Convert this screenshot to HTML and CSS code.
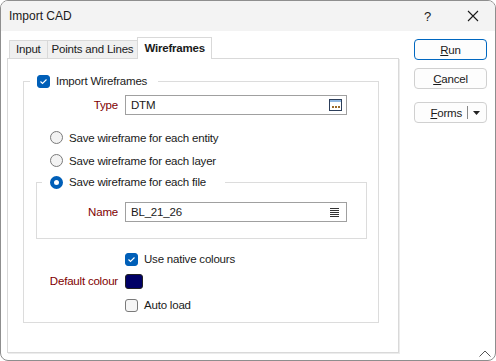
FILE: index.html
```html
<!DOCTYPE html>
<html lang="en">
<head>
	<meta charset="UTF-8">
	<title>Import CAD</title>
	<link rel="stylesheet" href="styles.css">
</head>
<body>
	<div class="window">
		<div class="titlebar">
			<span class="title">Import CAD</span>
			<span class="help">?</span>
			<span class="close">
				<svg width="12" height="12" viewBox="0 0 12 12"><path d="M1 1 L11 11 M11 1 L1 11" stroke="#1a1a1a" stroke-width="1.1"/></svg>
			</span>
		</div>
		<div class="dialog-body">
			<div class="main">
				<div class="tabs">
					<div class="tab tab-input">Input</div>
					<div class="tab">Points and Lines</div>
					<div class="tab active">Wireframes</div>
				</div>
				<div class="panel">
					<div class="group outer">
						<div class="legend"><span class="check on"></span>Import Wireframes</div>
						<div class="row row-type">
							<label class="lbl">Type</label>
							<div class="field">DTM
								<svg class="field-icon" width="13" height="12" viewBox="0 0 13 12">
									<rect x="0.5" y="0.5" width="12" height="11" fill="#fff" stroke="#2c3e5a"/>
									<rect x="1" y="1" width="11" height="2" fill="#8fb6e0"/>
									<rect x="3" y="7" width="2" height="2" fill="#9a6a2a"/>
									<rect x="6" y="7" width="2" height="2" fill="#9a6a2a"/>
									<rect x="9" y="7" width="2" height="2" fill="#9a6a2a"/>
								</svg>
							</div>
						</div>
						<div class="opt first"><span class="radio"></span>Save wireframe for each entity</div>
						<div class="opt"><span class="radio"></span>Save wireframe for each layer</div>
						<div class="group inner">
							<div class="legend"><span class="radio on"></span>Save wireframe for each file</div>
							<div class="row row-name">
								<label class="lbl">Name</label>
								<div class="field">BL_21_26
									<svg class="field-icon" width="9" height="9" viewBox="0 0 9 9">
										<path d="M0 0.5 H9 M0 2.5 H9 M0 4.5 H9 M0 6.5 H9 M0 8.5 H9" stroke="#333" stroke-width="1"/>
									</svg>
								</div>
							</div>
						</div>
						<div class="row row-native">
							<span class="lbl"></span>
							<span class="check on"></span><span class="cap">Use native colours</span>
						</div>
						<div class="row row-colour">
							<label class="lbl">Default colour</label>
							<span class="swatch"></span>
						</div>
						<div class="row row-auto">
							<span class="lbl"></span>
							<span class="check"></span><span class="cap">Auto load</span>
						</div>
					</div>
				</div>
			</div>
			<div class="side">
				<div class="btn default"><span><u>R</u>un</span></div>
				<div class="btn cancel"><span><u>C</u>ancel</span></div>
				<div class="btn forms">
					<span class="forms-text"><u>F</u>orms</span>
					<span class="sep"></span>
					<svg width="7" height="4" viewBox="0 0 7 4"><path d="M0 0 H7 L3.5 4 Z" fill="#222"/></svg>
				</div>
			</div>
		</div>
		<svg class="grip" width="12" height="7" viewBox="0 0 12 7"><path d="M0.5 6.5 L6 1 L11.5 6.5" fill="none" stroke="#555" stroke-width="1"/></svg>
	</div>
</body>
</html>
```

FILE: styles.css
```css
* {padding: 0; margin: 0; box-sizing: border-box;}
body {
	background: #fff;
	font-size: 11.5px;
	letter-spacing: -0.2px;
	font-family: "Liberation Sans", "Noto Sans", sans-serif;
	color: #000;
}
.window {
	position: relative;
	width: 496px;
	height: 361px;
	border: 1px solid #8e8e8e;
	border-radius: 8px;
	background: #fff;
	overflow: hidden;
}
.titlebar {
	display: flex;
	align-items: center;
	height: 30px;
	background: #f3f3f3;
	padding-left: 8px;
}
.title {
	flex: 1;
	font-size: 12px;
	letter-spacing: 0;
	color: #1a1a1a;
}
.help {
	width: 12px;
	margin-right: 31px;
	font-size: 13px;
	color: #1a1a1a;
}
.close {
	display: flex;
	width: 12px;
	margin-right: 16px;
}
.dialog-body {
	display: flex;
	padding: 7px 0 0 6px;
}
.main {
	width: 392px;
}
.tabs {
	display: flex;
	align-items: flex-end;
	height: 20px;
	padding-left: 2px;
	position: relative;
	z-index: 1;
}
.tab {
	height: 18px;
	line-height: 17px;
	padding: 0 4px;
	background: #f0f0f0;
	border: 1px solid #d9d9d9;
	border-bottom: none;
	margin-right: -1px;
	color: #1a1a1a;
}
.tab.tab-input {
	padding: 0 6px;
}
.tab.active {
	height: 22px;
	margin-bottom: -1px;
	background: #fff;
	font-weight: bold;
	line-height: 20px;
	padding: 0 6px;
	margin-right: 0;
}
.panel {
	height: 295px;
	border: 1px solid #d9d9d9;
	box-shadow: 1px 1px 0 #ececec;
	padding: 22px 0 0 15px;
}
.group {
	border: 1px solid #dcdcdc;
}
.group.outer {
	width: 356px;
	height: 242px;
}
.legend {
	display: flex;
	align-items: center;
	width: max-content;
	background: #fff;
	height: 16px;
	color: #1a1a1a;
}
.outer > .legend {
	margin: -9px 0 0 6px;
	padding: 0 11px 0 7px;
}
.check {
	display: inline-block;
	width: 13px;
	height: 13px;
	border: 1px solid #7a7a7a;
	border-radius: 3px;
	background: #f6f6f6;
	margin-right: 6px;
	flex: none;
}
.check.on {
	border-color: #005fb8;
	background: #005fb8 url("data:image/svg+xml,%3Csvg xmlns='http://www.w3.org/2000/svg' width='11' height='11' viewBox='0 0 11 11'%3E%3Cpath d='M2.5 5.5 L4.5 7.5 L8.5 3.5' fill='none' stroke='%23fff' stroke-width='1.1'/%3E%3C/svg%3E") no-repeat center;
}
.radio {
	display: inline-block;
	width: 13px;
	height: 13px;
	border: 1px solid #7a7a7a;
	border-radius: 50%;
	background: #f3f3f3;
	margin-right: 6px;
	flex: none;
}
.radio.on {
	border: 4px solid #005fb8;
	background: #fff;
}
.row {
	display: flex;
	align-items: center;
	height: 20px;
}
.lbl {
	width: 94px;
	margin-right: 7px;
	text-align: right;
	color: #800000;
	flex: none;
}
.row-type {
	margin-top: 6px;
}
.field {
	display: flex;
	align-items: center;
	justify-content: space-between;
	width: 222px;
	height: 20px;
	border: 1px solid #a0a0a0;
	padding: 0 4px 0 5px;
	color: #1a1a1a;
}
.row-name .field {
	padding-right: 7px;
}
.opt {
	display: flex;
	align-items: center;
	height: 23px;
	padding-left: 26px;
	color: #1a1a1a;
}
.opt.first {
	margin-top: 11px;
}
.group.inner {
	width: 331px;
	height: 57px;
	margin: 10px 0 0 12px;
}
.inner > .legend {
	height: 22px;
	margin: -12px 0 0 5px;
	padding: 0 19px 0 8px;
}
.row-name {
	margin-top: 9px;
}
.row-name .lbl {
	width: 81px;
}
.row-native {
	margin-top: 10px;
}
.row-colour {
	margin-top: 2px;
}
.row-auto {
	margin-top: 4px;
}
.cap {
	color: #1a1a1a;
}
.swatch {
	width: 18px;
	height: 15px;
	border: 1px solid #222;
	border-radius: 3px;
	background: #000066;
}
.side {
	display: flex;
	flex-direction: column;
	width: 73px;
	margin-left: 15px;
	padding-top: 1px;
}
.btn {
	display: flex;
	align-items: center;
	justify-content: center;
	height: 21px;
	border: 1px solid #d0d0d0;
	border-radius: 4px;
	color: #1a1a1a;
	background: #fdfdfd;
}
.btn.default {
	border-color: #0067c0;
}
.btn.cancel {
	margin-top: 8px;
}
.btn.forms {
	margin-top: 13px;
	justify-content: flex-end;
	padding-right: 6px;
}
.sep {
	width: 1px;
	height: 13px;
	background: #888;
	margin: 0 5px 0 5px;
}
.grip {
	position: absolute;
	right: 4px;
	bottom: 3px;
}
```
